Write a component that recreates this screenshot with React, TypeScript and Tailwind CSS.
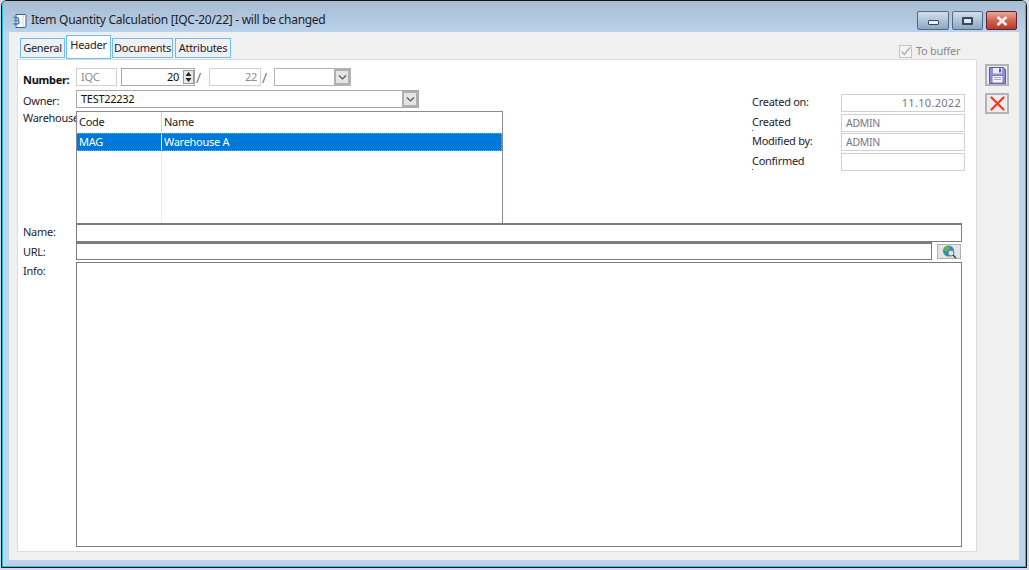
import type { ReactNode } from "react";

const font = "[font-family:'Noto_Sans','Open_Sans',sans-serif]";

function Label({ children, className = "" }: { children: ReactNode; className?: string }) {
  return <div className={`w-[53px] shrink-0 text-[11px] leading-[14px] text-[#1c1c2c] ${className}`}>{children}</div>;
}

function Tab({ children, active = false, w }: { children: ReactNode; active?: boolean; w: string }) {
  return active ? (
    <div className={`flex h-[24px] ${w} items-start justify-center border border-[#6cbcf5] bg-white pt-[2px] text-[11px] leading-[14px] text-[#1c1c2c]`}>
      {children}
    </div>
  ) : (
    <div className={`mt-[3px] flex h-[20px] ${w} items-center justify-center border border-[#6cbcf5] bg-[#f0f0f0] text-[11px] leading-[14px] text-[#1c1c2c]`}>
      {children}
    </div>
  );
}

function Chevron() {
  return (
    <svg width="9" height="5" viewBox="0 0 9 5" fill="none">
      <path d="M1 0.5 L4.5 4 L8 0.5" stroke="#555" strokeWidth="1.2" />
    </svg>
  );
}

function WinButton({ children, red = false, w }: { children: ReactNode; red?: boolean; w: string }) {
  return (
    <div
      className={`flex h-[19px] ${w} items-center justify-center rounded-[2px] border ${
        red
          ? "border-[#5d2030] bg-gradient-to-b from-[#e8a89c] via-[#d0634f] to-[#b53a26]"
          : "border-[#55697e] bg-gradient-to-b from-[#d0dfec] via-[#aec5da] to-[#8aa7c4]"
      }`}
    >
      {children}
    </div>
  );
}

function InfoRow({ label, value, right = false, h, clipped = false }: { label: string; value: string; right?: boolean; h: string; clipped?: boolean }) {
  return (
    <div className={`flex ${h} items-start`}>
      <div className="relative w-[89px] shrink-0 pt-[1px] text-[11px] leading-[14px] text-[#1c1c2c]">
        {label}
        {clipped && <div className="absolute left-0 top-[16px] h-[1px] w-[1px] bg-[#555]" />}
      </div>
      <div
        className={`h-[18px] w-[124px] border border-[#d0d0d0] px-[3px] text-[#76768a] ${
          right ? "text-right text-[11px] leading-[16px] tracking-[0.3px]" : "pl-[4px] text-[10.5px] leading-[17px]"
        }`}
      >
        {value}
      </div>
    </div>
  );
}

export default function App() {
  return (
    <div className={`h-[570px] w-[1029px] overflow-hidden bg-[#d4d8e4] pl-[1px] tracking-[-0.28px] ${font}`}>
      <div className="h-[568px] w-[1026px] overflow-hidden rounded-t-[6px] border border-[#111]">
        <div className="flex h-[566px] flex-col border-x border-b border-x-[#12c8e8] border-b-[#12c8e8] bg-[#bdd4ec]">
          {/* Title bar */}
          <div className="flex h-[31px] shrink-0 items-start bg-gradient-to-b from-[#a8bcd2] to-[#bad2ea] pl-[9px] pr-[8px] pt-[10px]">
            <svg width="15" height="16" viewBox="0 0 15 16" className="mt-[2px] shrink-0">
              <path d="M4 1.5 H13 Q14 1.5 14 2.5 V13.5 Q14 14.5 13 14.5 H4 Z" fill="#fbfdff" stroke="#44607e" />
              <path d="M11 2 V14" stroke="#c4d6e8" />
              <path d="M1.5 4.5 H5 Q6.5 4.5 6.5 6 Q6.5 7.5 5 7.5 Q7 7.5 7 9.3 Q7 11 5 11 H1.5" fill="none" stroke="#3f7cc0" strokeWidth="1.3" />
              <path d="M2 7.5 H5" stroke="#3f7cc0" strokeWidth="1.2" />
            </svg>
            <div className="ml-[4px] mt-[1px] text-[12px] leading-[16px] text-[#1d1d28]">
              Item Quantity Calculation [IQC-20/22] - will be changed
            </div>
            <div className="ml-auto flex items-center gap-[3px]">
              <WinButton w="w-[32px]">
                <div className="mt-[4px] h-[5px] w-[11px] rounded-[1px] border border-[#37475a] bg-[#eef2f6]" />
              </WinButton>
              <WinButton w="w-[31px]">
                <div className="h-[8px] w-[11px] rounded-[1px] border-2 border-[#37475a] bg-[#dfe7ef]" />
              </WinButton>
              <WinButton red w="w-[31px]">
                <svg width="12" height="10" viewBox="0 0 12 10">
                  <path d="M1.5 1 L10.5 9 M10.5 1 L1.5 9" stroke="#f4f0ee" strokeWidth="2.8" />
                </svg>
              </WinButton>
            </div>
          </div>

          {/* Client area */}
          <div className="mx-[6px] flex h-[528px] shrink-0 flex-col bg-[#f0f0f0] pl-[8px]">
            <div className="flex h-[27px] shrink-0 items-start pl-[3px] pt-[3px]">
              <div className="relative z-10 flex">
                <Tab w="w-[45px]">General</Tab>
                <div className="ml-[1px]">
                  <Tab active w="w-[45px]">Header</Tab>
                </div>
                <div className="ml-[1px]">
                  <Tab w="w-[61px]">Documents</Tab>
                </div>
                <div className="ml-[2px]">
                  <Tab w="w-[56px]">Attributes</Tab>
                </div>
              </div>
              <div className="ml-[668px] mt-[9px] flex items-center gap-[4px]">
                <div className="flex h-[13px] w-[13px] items-center justify-center border border-[#c4c4c4] bg-[#f4f4f4]">
                  <svg width="11" height="11" viewBox="0 0 11 11" fill="none">
                    <path d="M1.5 5.5 L4.5 8.5 L10 1.5" stroke="#b0b0b0" strokeWidth="1.4" />
                  </svg>
                </div>
                <span className="text-[11px] leading-[14px] text-[#8a8a94]">To buffer</span>
              </div>
            </div>

            <div className="flex min-h-0 flex-1">
              {/* Panel */}
              <div className="flex h-[493px] w-[960px] shrink-0 flex-col border border-[#dcdcdc] bg-white pl-[5px] pr-[14px] pt-[8px]">
                <div className="flex">
                  <div className="flex w-[480px] shrink-0 flex-col">
                    {/* Number row */}
                    <div className="flex h-[18px] items-start">
                      <Label className="pt-[5px] font-bold text-[#101018]">Number:</Label>
                      <div className="h-[18px] w-[41px] border border-[#d0d0d0] px-[4px] text-[11px] leading-[16px] text-[#8a8a96]">IQC</div>
                      <div className="ml-[4px] flex h-[18px] w-[74px] items-center justify-end border border-[#a8a8a8] text-[11px] text-[#111]">
                        <span className="mr-[4px]">20</span>
                        <div className="flex h-[14px] w-[11px] flex-col border border-[#999] bg-[#e8e8e8]">
                          <svg width="9" height="6" viewBox="0 0 9 6"><path d="M4.5 1 L7.5 5 H1.5 Z" fill="#222" /></svg>
                          <svg width="9" height="6" viewBox="0 0 9 6"><path d="M4.5 5 L7.5 1 H1.5 Z" fill="#222" /></svg>
                        </div>
                      </div>
                      <span className="w-[14px] pl-[1px] text-[14px] leading-[20px] text-[#777]">/</span>
                      <div className="h-[18px] w-[52px] border border-[#d0d0d0] px-[3px] text-right text-[11px] leading-[16px] text-[#8a8a96]">22</div>
                      <span className="w-[13px] pl-[1px] text-[14px] leading-[20px] text-[#777]">/</span>
                      <div className="flex h-[18px] w-[77px] items-stretch justify-end border border-[#b4b4b4]">
                        <div className="flex w-[16px] items-center justify-center border-[2px] border-[#b0b0b0] bg-[#e4e4e4]">
                          <Chevron />
                        </div>
                      </div>
                    </div>
                    {/* Owner row */}
                    <div className="mt-[4px] flex h-[18px] items-start">
                      <Label className="pt-[4px]">Owner:</Label>
                      <div className="flex h-[18px] w-[343px] items-stretch border border-[#a8a8a8] pl-[4px] text-[11px] leading-[15px] text-[#111]">
                        <span className="flex-1">TEST22232</span>
                        <div className="flex w-[16px] items-center justify-center border-[2px] border-[#b0b0b0] bg-[#e4e4e4]">
                          <Chevron />
                        </div>
                      </div>
                    </div>
                    {/* Warehouse row */}
                    <div className="mt-[3px] flex">
                      <Label className="whitespace-nowrap">Warehouse</Label>
                      <div className="relative z-10 h-[112px] w-[427px] shrink-0 border border-b-0 border-[#8a8a90] bg-white text-[11px] text-[#1c1c2c]">
                        <div className="flex h-[20px] leading-[19px]">
                          <div className="w-[85px] border-r border-[#d8d8d8] pl-[2px]">Code</div>
                          <div className="pl-[2px]">Name</div>
                        </div>
                        <div className="mt-[1px] flex h-[18px] border-y border-r border-dotted border-[#f0962a] bg-[#0078d7] leading-[16px] text-white">
                          <div className="w-[85px] border-r border-[#e8eef8] pl-[2px]">MAG</div>
                          <div className="pl-[2px]">Warehouse A</div>
                        </div>
                        <div className="h-[72px] w-[85px] border-r border-[#ececec]" />
                      </div>
                    </div>
                  </div>
                  {/* Right info */}
                  <div className="ml-[249px] mt-[26px] flex flex-col">
                    <InfoRow h="h-[20px]" label="Created on:" value="11.10.2022" right />
                    <InfoRow h="h-[19px]" label="Created" value="ADMIN" clipped />
                    <InfoRow h="h-[20px]" label="Modified by:" value="ADMIN" />
                    <InfoRow h="h-[18px]" label="Confirmed" value="" clipped />
                  </div>
                </div>

                {/* Name */}
                <div className="flex h-[19px] items-start">
                  <Label className="pt-[2px]">Name:</Label>
                  <div className="h-[19px] flex-1 border border-t-2 border-[#7c7c7c]" />
                </div>
                {/* URL */}
                <div className="flex h-[20px] items-start">
                  <Label className="pt-[3px]">URL:</Label>
                  <div className="h-[18px] flex-1 border border-t-2 border-[#7c7c7c]" />
                  <div className="ml-[5px] mr-[1px] mt-[2px] flex h-[15px] w-[24px] items-center justify-center border border-[#b0b0b0] bg-[#e4e4e4]">
                    <svg width="15" height="14" viewBox="0 0 15 14">
                      <circle cx="6.5" cy="6" r="5.5" fill="#2f8fc4" />
                      <path d="M3 2 Q6 0.5 8 2 L7 5 L4 7 L2 5 Z" fill="#6fb33a" />
                      <path d="M8 7 L11 6 L10 10 L8 10 Z" fill="#6fb33a" />
                      <circle cx="9" cy="8" r="3" fill="#cfe6f2" stroke="#6a7a88" />
                      <path d="M11 10 L14 13" stroke="#444" strokeWidth="1.6" />
                    </svg>
                  </div>
                </div>
                {/* Info */}
                <div className="flex items-start">
                  <Label className="pt-[2px]">Info:</Label>
                  <div className="h-[285px] flex-1 border border-[#7c7c7c]" />
                </div>
              </div>

              {/* Side buttons */}
              <div className="ml-[8px] flex flex-col pt-[5px]">
                <div className="flex h-[22px] w-[24px] items-center justify-center border-2 border-[#b4b4b4] bg-[#ececec]">
                  <svg width="17" height="17" viewBox="0 0 17 17">
                    <path d="M0.5 0.5 H14.5 L16.5 2.5 V16.5 H0.5 Z" fill="#8f8fe0" stroke="#5a5aa8" />
                    <rect x="4" y="1" width="9" height="5.5" fill="#eeeef8" />
                    <rect x="10" y="1.5" width="2" height="4" fill="#5a5aa8" />
                    <rect x="3" y="8.5" width="11" height="7.5" fill="#f6f6fb" stroke="#7a7ac0" />
                    <path d="M5 10.5 H12 M5 12.5 H12" stroke="#a0a0d8" />
                  </svg>
                </div>
                <div className="mt-[7px] flex h-[21px] w-[24px] items-center justify-center border-2 border-[#b4b4b4] bg-[#ececec]">
                  <svg width="15" height="15" viewBox="0 0 15 15">
                    <path d="M1.5 1.5 L13.5 13.5 M13.5 1.5 L1.5 13.5" stroke="#ee3a20" strokeWidth="2.2" strokeLinecap="round" />
                  </svg>
                </div>
              </div>
            </div>
          </div>
        </div>
      </div>
    </div>
  );
}
